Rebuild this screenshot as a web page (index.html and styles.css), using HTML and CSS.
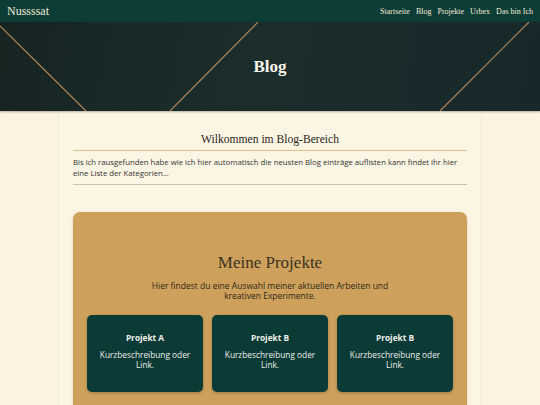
FILE: index.html
```html
<!DOCTYPE html>
<html lang="de">
<head>
<meta charset="utf-8">
<title>Blog</title>
<link rel="stylesheet" href="styles.css">
</head>
<body>
<nav class="navbar">
  <a class="brand" href="#">Nussssat</a>
  <ul class="nav-links">
    <li><a href="#">Startseite</a></li>
    <li><a href="#">Blog</a></li>
    <li><a href="#">Projekte</a></li>
    <li><a href="#">Urbex</a></li>
    <li><a href="#">Das bin Ich</a></li>
  </ul>
</nav>
<header class="hero">
  <svg class="hero-lines" viewBox="0 0 540 89" preserveAspectRatio="none" aria-hidden="true">
    <line x1="0" y1="4" x2="86" y2="89" stroke="#b08458" stroke-width="1.2"/>
    <line x1="258" y1="0" x2="170" y2="89" stroke="#b08458" stroke-width="1.2"/>
    <line x1="529" y1="0" x2="440" y2="89" stroke="#b08458" stroke-width="1.2"/>
  </svg>
  <h1 class="hero-title">Blog</h1>
</header>
<main class="container">
  <section class="intro">
    <h2 class="intro-title">Wilkommen im Blog-Bereich</h2>
    <p class="intro-text">Bis ich rausgefunden habe wie ich hier automatisch die neusten Blog einträge auflisten kann findet ihr hier eine Liste der Kategorien...</p>
  </section>
  <section class="projects">
    <h2 class="projects-title">Meine Projekte</h2>
    <p class="projects-sub">Hier findest du eine Auswahl meiner aktuellen Arbeiten und kreativen Experimente.</p>
    <div class="cards">
      <div class="card"><h3>Projekt A</h3><p>Kurzbeschreibung oder Link.</p></div>
      <div class="card"><h3>Projekt B</h3><p>Kurzbeschreibung oder Link.</p></div>
      <div class="card"><h3>Projekt B</h3><p>Kurzbeschreibung oder Link.</p></div>
    </div>
  </section>
</main>
</body>
</html>
```
FILE: styles.css
```css
* { box-sizing: border-box; }
html, body { margin: 0; padding: 0; }
body {
  background: #fcf3e0;
  font-family: "Open Sans", "Noto Sans", sans-serif;
  color: #2e2a24;
  overflow: hidden;
}
a { text-decoration: none; color: inherit; }

.navbar {
  height: 22px;
  background: #0c3d37;
  display: flex;
  align-items: center;
  justify-content: space-between;
  padding: 0 7px 0 7px;
  font-family: "Liberation Serif", "DejaVu Serif", serif;
  color: #f3ead6;
}
.brand { font-size: 12px; }
.nav-links {
  list-style: none;
  display: flex;
  gap: 6px;
  margin: 0;
  padding: 0;
  font-size: 8px;
}

.hero {
  position: relative;
  height: 89px;
  background: linear-gradient(100deg, #162422 0%, #1b2e2c 45%, #17282a 100%);
  display: flex;
  align-items: center;
  justify-content: center;
  box-shadow: 0 1px 2px rgba(0,0,0,0.3);
}
.hero-lines {
  position: absolute;
  inset: 0;
  width: 100%;
  height: 100%;
}
.hero-title {
  position: relative;
  margin: 0;
  font-family: "Liberation Serif", "DejaVu Serif", serif;
  font-weight: bold;
  font-size: 17px;
  color: #fbf6ee;
}

.container {
  width: 424px;
  margin: 0 auto;
  background: #fdf5e4;
  border-left: 1px solid #f3ead6;
  border-right: 1px solid #f3ead6;
  padding: 22px 14px 40px;
  min-height: 320px;
}
.intro-title {
  margin: 0;
  text-align: center;
  font-family: "Liberation Serif", "DejaVu Serif", serif;
  font-weight: normal;
  font-size: 11.6px;
  color: #2a2620;
  padding-bottom: 4px;
  border-bottom: 1px solid #dcc18e;
}
.intro-text {
  margin: 0;
  padding: 6px 0 5px;
  font-size: 7.75px;
  line-height: 11px;
  color: #333;
  border-bottom: 1px solid #c9c2b4;
}

.projects {
  margin-top: 27px;
  background: #cda15b;
  border-radius: 7px;
  padding: 41px 14px 20px;
  text-align: center;
  box-shadow: 0 1px 3px rgba(120,90,40,0.25);
}
.projects-title {
  margin: 0;
  font-family: "Liberation Serif", "DejaVu Serif", serif;
  font-weight: normal;
  font-size: 17px;
  color: #3b3222;
}
.projects-sub {
  width: 250px;
  margin: 8px auto 0;
  font-size: 8.5px;
  line-height: 10px;
  color: #2e2717;
}
.cards {
  display: grid;
  grid-template-columns: repeat(3, 1fr);
  gap: 9px;
  margin-top: 14px;
}
.card {
  background: #0b3b36;
  border-radius: 5px;
  height: 77px;
  padding: 17px 6px 0;
  color: #eef0ea;
  box-shadow: 0 1px 3px rgba(0,0,0,0.25);
}
.card h3 {
  margin: 0;
  font-size: 8.3px;
  font-weight: bold;
}
.card p {
  margin: 7px 0 0;
  font-size: 8.3px;
  line-height: 10px;
}
```
